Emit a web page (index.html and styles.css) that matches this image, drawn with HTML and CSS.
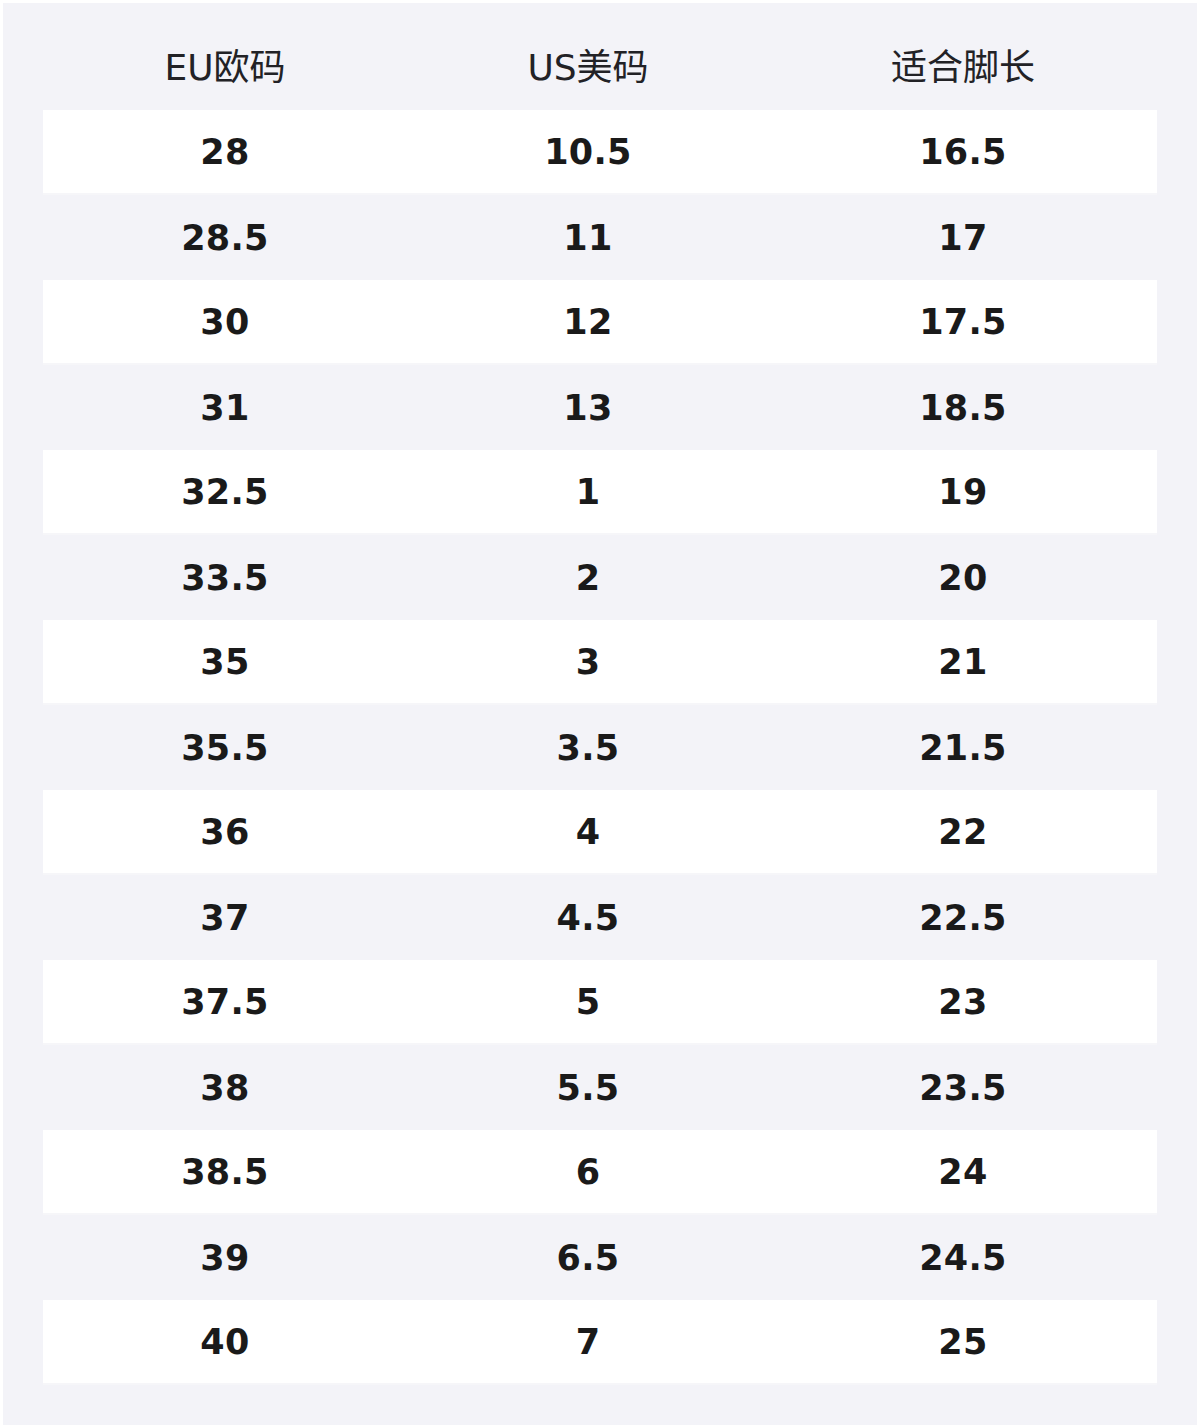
FILE: index.html
```html
<!DOCTYPE html>
<html>
<head>
<meta charset="utf-8">
<link rel="stylesheet" href="styles.css">
</head>
<body>
<div class="panel">
  <div class="row head">
    <div class="cell">EU欧码</div>
    <div class="cell">US美码</div>
    <div class="cell">适合脚长</div>
  </div>
  <div class="row odd"><div class="cell">28</div><div class="cell">10.5</div><div class="cell">16.5</div></div>
  <div class="row"><div class="cell">28.5</div><div class="cell">11</div><div class="cell">17</div></div>
  <div class="row odd"><div class="cell">30</div><div class="cell">12</div><div class="cell">17.5</div></div>
  <div class="row"><div class="cell">31</div><div class="cell">13</div><div class="cell">18.5</div></div>
  <div class="row odd"><div class="cell">32.5</div><div class="cell">1</div><div class="cell">19</div></div>
  <div class="row"><div class="cell">33.5</div><div class="cell">2</div><div class="cell">20</div></div>
  <div class="row odd"><div class="cell">35</div><div class="cell">3</div><div class="cell">21</div></div>
  <div class="row"><div class="cell">35.5</div><div class="cell">3.5</div><div class="cell">21.5</div></div>
  <div class="row odd"><div class="cell">36</div><div class="cell">4</div><div class="cell">22</div></div>
  <div class="row"><div class="cell">37</div><div class="cell">4.5</div><div class="cell">22.5</div></div>
  <div class="row odd"><div class="cell">37.5</div><div class="cell">5</div><div class="cell">23</div></div>
  <div class="row"><div class="cell">38</div><div class="cell">5.5</div><div class="cell">23.5</div></div>
  <div class="row odd"><div class="cell">38.5</div><div class="cell">6</div><div class="cell">24</div></div>
  <div class="row"><div class="cell">39</div><div class="cell">6.5</div><div class="cell">24.5</div></div>
  <div class="row odd"><div class="cell">40</div><div class="cell">7</div><div class="cell">25</div></div>
</div>
</body>
</html>
```
FILE: styles.css
```css
html, body {
  margin: 0;
  padding: 0;
  background: #ffffff;
}
body {
  padding: 3px;
  font-family: "DejaVu Sans", "Noto Sans CJK SC", sans-serif;
  color: #1a1a1a;
}
.panel {
  width: 1194px;
  height: 1422px;
  box-sizing: border-box;
  background: #f3f3f8;
  padding: 0 40px 40px 40px;
}
.row {
  display: grid;
  grid-template-columns: 364px 362px 1fr;
  height: 85px;
  align-items: center;
}
.row.odd {
  background: #ffffff;
  height: 83px;
  border-bottom: 2px solid #f6f6f9;
}
.row.head {
  height: 107px;
  padding-top: 22px;
  box-sizing: border-box;
}
.cell {
  text-align: center;
  font-size: 35px;
  font-weight: bold;
  line-height: 1;
  letter-spacing: 0.3px;
  padding-top: 2px;
}
.head .cell {
  font-size: 36px;
  font-weight: normal;
  letter-spacing: 0;
  padding-top: 0;
  color: #222226;
}
```
